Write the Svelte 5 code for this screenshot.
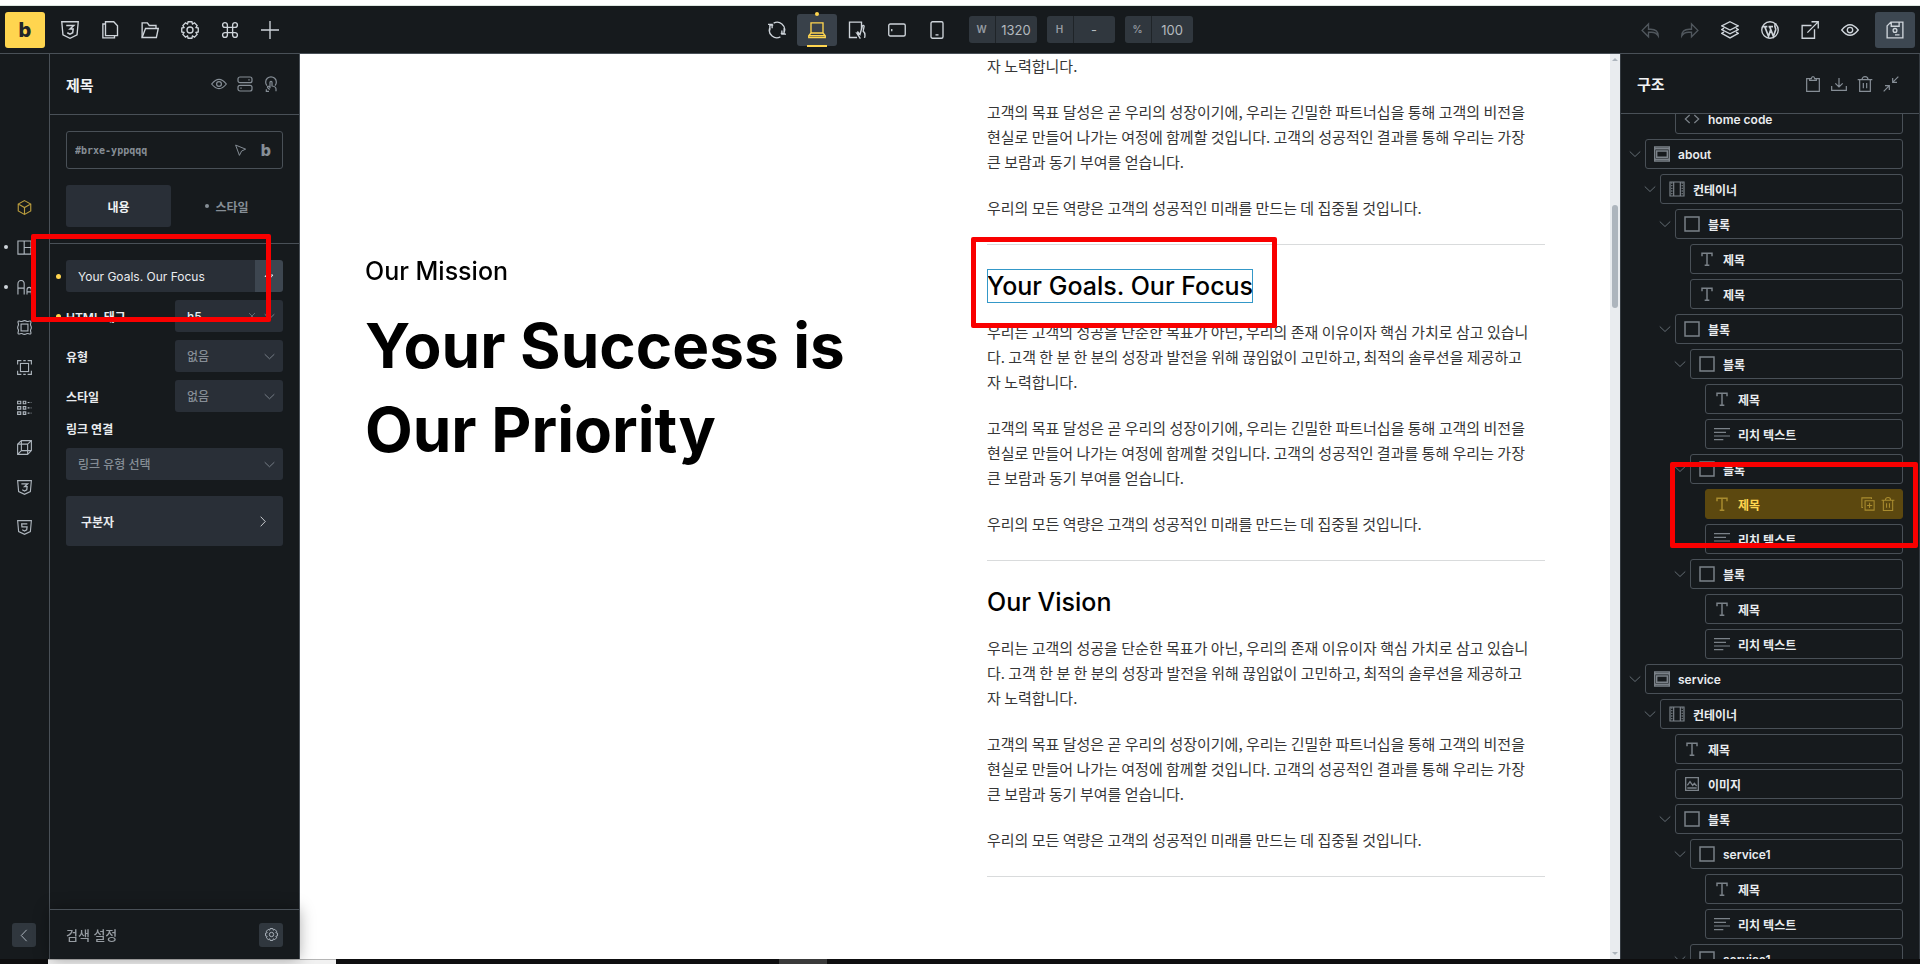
<script>
  import { onMount } from "svelte";

  // Inner markup of every icon, drawn on a 24x24 grid
  const icons = {
    css: '<path d="M1 1h22l-1.600 17.500L12 23l-9.400-4.500z"/><path d="M7 6h10l-5 4.700h4.200l-.6 5-3.600 1.800-3.600-1.800" stroke-width="2"/>',
    html: '<path d="M1 1h22l-1.600 17.500L12 23l-9.400-4.500z"/><path d="M16.500 6h-9l.4 5h8.200l-.6 4.700-3.500 1.800-3.600-1.800" stroke-width="2"/>',
    pages: '<path d="M6 1h11l5 5.500V19.500H6z"/><path d="M6 4H2.500V22.500H18V19.500"/>',
    folder: '<path d="M1.500 22V2.500h7l2.500 3.500h9v4"/><path d="M1.500 22l4.500-12h17l-2.500 12z"/>',
    gear: '<circle cx="12" cy="12" r="4"/><path d="M9.500 1h5l.8 3 2.700-1.500 3.500 3.500L20 8.700l3 .8v5l-3 .8 1.500 2.700-3.500 3.500-2.700-1.500-.8 3h-5l-.8-3L6 21.500 2.500 18 4 15.300l-3-.8v-5l3-.8L2.500 6 6 2.500 8.700 4z"/>',
    command: '<path d="M8.500 5.300a3.200 3.200 0 1 0-3.200 3.200h13.400a3.200 3.200 0 1 0-3.200-3.200v13.400a3.200 3.200 0 1 0 3.200-3.200H5.300a3.200 3.200 0 1 0 3.200 3.200z"/>',
    plus: '<path d="M12 0v24M0 12h24"/>',
    refresh: '<path d="M7.500 2.800A10 10 0 0 1 21.800 14.500M16.500 21.200A10 10 0 0 1 2.200 9.500"/><path d="M2.500 13.500V6.500H7M0 5.500h5.500v5M21.500 10.500v7H17M24 18.500h-5.500v-5" transform="translate(0 -1)"/>',
    laptop: '<path d="M4 2.500h16V16H4zM4 16L1 19.500V22h22v-2.500L20 16M1 19.500h22"/>',
    tablet: '<path d="M12 22H2V1.500h16V11"/><path d="M12.500 14l3.500 4 3-11c.5-2 2.800-1.300 2.400.5l-1.200 6c2.300 2 2.900 5.500 1.800 9M16 18l-4-1.500 4.500 7"/>',
    landscape: '<rect x="1" y="4" width="22" height="16" rx="2"/><path d="M5 10.500v3"/>',
    mobile: '<rect x="4" y="1" width="16" height="22" rx="2"/><path d="M10 18.500h4"/>',
    undo: '<path d="M23 20c0-6-3-9-10-9H10V4L1.500 12.500 10 21v-6h4c4 0 7 1.500 9 5z"/>',
    redo: '<path d="M1 20c0-6 3-9 10-9h3V4l8.500 8.500L14 21v-6h-4c-4 0-7 1.500-9 5z"/>',
    layers: '<path d="M12 1l11 5.500L12 12 1 6.500z"/><path d="M4 9.500l-3 2 11 5.500 11-5.500-3-2"/><path d="M4 14.500l-3 2L12 22.500l11-6-3-2"/>',
    wordpress: '<circle cx="12" cy="12" r="11"/><path d="M2.500 7.500h6M10 7.500h6M5 7.500l5 13 3-9M11.500 7.500l5 13 3-8.500c.8-3-1.700-4-1-6.500.3-1.200 1-1.500 2-1.200" stroke-width="2.200"/>',
    external: '<path d="M14 6H1.500v17H18V11M8.500 15.500L22.500 1.500M14 1h9v9"/>',
    eye: '<path d="M1 12c4-5 7-7 11-7s7 2 11 7c-4 5-7 7-11 7s-7-2-11-7z"/><circle cx="12" cy="12" r="3.600"/>',
    save: '<path d="M1.500 6.500l5-5h16v21h-21zM7 1.500V7h10.500V1.500M12 18.500h6"/><circle cx="12" cy="12.500" r="2.500"/>',
    toggles: '<rect x="1.500" y="1.500" width="21" height="8.500" rx="3"/><rect x="1.500" y="14" width="21" height="8.500" rx="3"/><path d="M17 5.800h2M5 18.300h2"/>',
    touch: '<path d="M6 14.500A8 8 0 1 1 18 14.500"/><path d="M10.500 18.500V9.500c0-2 3-2 3 0v5.500c4 .5 6 1.500 6 4.500V23M10.500 17l-2-1.500c-2-.5-2.500 1-1 2.500l2.500 2.500M9 23H5v-3"/>',
    pointer: '<path d="M3 2l18.500 7.500-7.500 3.500-4 8z"/>',
    cube: '<path d="M12 1l10 5.500v11L12 23 2 17.500v-11zM2 6.500L12 12l10-5.500M12 12v11"/>',
    layout: '<path d="M1.500 1.500h21v21h-21zM11.500 1.500v21M11.500 12h11"/>',
    type: '<path d="M1.500 23V6.500C1.500-1 11.500-1 11.500 6.500V23M1.500 13h10M16 23v-7c0-5.500 7-5.500 7 0v7M16 19h7"/>',
    background: '<rect x="6.500" y="6.500" width="11" height="11"/><path d="M2 2c2-1.500 4 1.500 6.700 0S13 .5 15.300 2 20 .5 22 2c1.500 2-1.500 4 0 6.700s1.500 4 0 6.600 1.500 4.700 0 6.700c-2 1.500-4-1.500-6.700 0s-4.300 1.500-6.600 0S4 23.500 2 22c-1.500-2 1.500-4 0-6.700s-1.500-4 0-6.600S.5 4 2 2z"/>',
    border: '<rect x="5.500" y="5.500" width="13" height="13"/><path d="M1 7V1h6M17 1h6v6M23 17v6h-6M7 23H1v-6M10 1h4M10 23h4"/>',
    grid: '<path d="M1 2h5v4H1zM10 2h4v4h-4zM1 10.500h5v4H1zM10 10.500h4v4h-4zM1 19h5v4H1zM10 19h4v4h-4zM17 4h3M22 4h1M17 12.500h3M22 12.500h1M17 21h3M22 21h1"/>',
    box: '<path d="M1 6.500L7 1h16v16l-6 6H1zM1 6.500h16V23M17 6.500L23 1M7 1v16h16M1 23l6-6"/>',
    bolt: '<path d="M14 2L4 13h7l-2 9L20 10h-7z"/>',
    down: '<path d="M1.500 7l10.500 10L22.500 7"/>',
    right: '<path d="M8 1.500L18 12 8 22.500"/>',
    left: '<path d="M16 1.500L6 12l10 10.500"/>',
    close: '<path d="M3 3l18 18M21 3L3 21"/>',
    clipboard: '<path d="M7 4H2.500v19h19V4H17M7 6.500V4h2.500c.5-4 4.500-4 5 0H17v2.500z"/>',
    download: '<path d="M12 3v13M6.500 11l5.500 5.500 5.500-5.500M1 15v6.500h22V15"/>',
    trash: '<path d="M1 5.500h22M4 5.500V23h16V5.500M7.500 5.500C7.500-.5 16.500-.5 16.500 5.500M9.500 10.500v8M14.500 10.500v8"/>',
    collapse: '<path d="M23 1l-8.500 8.500M14.500 3v6.500H21M1 23l8.500-8.500M3 14.500h6.500V21"/>',
    code: '<path d="M8.500 6L2 12l6.500 6M15.500 6l6.500 6-6.500 6"/>',
    section: '<path d="M1 1.500h22v21H1zM4 7.500h16v9.500H4zM1 4h22M1 20h22" stroke-width="2.200"/>',
    container: '<path d="M1.500 1.500h21v21h-21zM7 2v20M17 2v20"/><path d="M4.200 2v20M19.800 2v20" stroke-dasharray="2 2"/>',
    block: '<path d="M1.500 1.500h21v21h-21z" stroke-width="2.200"/>',
    heading: '<path d="M4.500 8V3.500h15V8M12 3.500v17.500M8.500 21.500h7" stroke-width="2.200"/>',
    text: '<path d="M0 4h24M0 9.500h18M0 15h24M0 20.500h14" stroke-width="1.800"/>',
    image: '<path d="M2.500 2.500h19v19h-19zM5 14l4-5.500 4 5.500 2.500-3 3.500 4M5 18h14" stroke-width="2"/>',
    duplicate: '<path d="M7 6.500h15.500v16H7zM3.500 18H1.500V1.500H18v2M14.700 10v9M10.200 14.500h9"/>',
  };

  const leftTools = ["css", "pages", "folder", "gear", "command", "plus"];
  const devices = ["refresh", "laptop", "tablet", "landscape", "mobile"];
  const rightTools = ["undo", "redo", "layers", "wordpress", "external", "eye"];
  const sizes = [
    { label: "W", value: "1320" },
    { label: "H", value: "-" },
    { label: "%", value: "100" },
  ];

  const rail = [
    { icon: "cube", active: true },
    { icon: "layout", dot: true },
    { icon: "type", dot: true },
    { icon: "background" },
    { icon: "border" },
    { icon: "grid" },
    { icon: "box" },
    { icon: "css" },
    { icon: "html" },
  ];

  const paragraphs = [
    [
      "우리는 고객의 성공을 단순한 목표가 아닌, 우리의 존재 이유이자 핵심 가치로 삼고 있습니",
      "다. 고객 한 분 한 분의 성장과 발전을 위해 끊임없이 고민하고, 최적의 솔루션을 제공하고",
      "자 노력합니다.",
    ],
    [
      "고객의 목표 달성은 곧 우리의 성장이기에, 우리는 긴밀한 파트너십을 통해 고객의 비전을",
      "현실로 만들어 나가는 여정에 함께할 것입니다. 고객의 성공적인 결과를 통해 우리는 가장",
      "큰 보람과 동기 부여를 얻습니다.",
    ],
    ["우리의 모든 역량은 고객의 성공적인 미래를 만드는 데 집중될 것입니다."],
  ];

  // what is left of the first story once the page is scrolled
  const tail = [paragraphs[0].slice(2), paragraphs[1], paragraphs[2]];

  const tree = [
    { depth: 2, icon: "code", name: "home code" },
    { depth: 0, icon: "section", name: "about", open: true },
    { depth: 1, icon: "container", name: "컨테이너", open: true },
    { depth: 2, icon: "block", name: "블록", open: true },
    { depth: 3, icon: "heading", name: "제목" },
    { depth: 3, icon: "heading", name: "제목" },
    { depth: 2, icon: "block", name: "블록", open: true },
    { depth: 3, icon: "block", name: "블록", open: true },
    { depth: 4, icon: "heading", name: "제목" },
    { depth: 4, icon: "text", name: "리치 텍스트" },
    { depth: 3, icon: "block", name: "블록", open: true },
    { depth: 4, icon: "heading", name: "제목", active: true },
    { depth: 4, icon: "text", name: "리치 텍스트" },
    { depth: 3, icon: "block", name: "블록", open: true },
    { depth: 4, icon: "heading", name: "제목" },
    { depth: 4, icon: "text", name: "리치 텍스트" },
    { depth: 0, icon: "section", name: "service", open: true },
    { depth: 1, icon: "container", name: "컨테이너", open: true },
    { depth: 2, icon: "heading", name: "제목" },
    { depth: 2, icon: "image", name: "이미지" },
    { depth: 2, icon: "block", name: "블록", open: true },
    { depth: 3, icon: "block", name: "service1", open: true },
    { depth: 4, icon: "heading", name: "제목" },
    { depth: 4, icon: "text", name: "리치 텍스트" },
    { depth: 3, icon: "block", name: "service1", open: true },
  ];

  let title = $state("Your Goals. Our Focus");
  let canvasEl;
  let treeEl;

  onMount(() => {
    canvasEl.scrollTop = canvasEl.scrollHeight;
    treeEl.scrollTop = 10;
  });
</script>

{#snippet icon(name, size = 18)}
  <svg width={size} height={size} viewBox="0 0 24 24" aria-hidden="true">
    {@html icons[name]}
  </svg>
{/snippet}

{#snippet dropdown(id, value, clearable = false)}
  <div class="select" class:filled={clearable}>
    <select {id}><option>{value}</option></select>
    <span class="select-icons">
      {#if clearable}{@render icon("close", 8)}{/if}
      {@render icon("down", 11)}
    </span>
  </div>
{/snippet}

{#snippet story(heading, body, selected = false)}
  <section class="story" class:first={!heading}>
    {#if heading}<h5 class:selected>{heading}</h5>{/if}
    {#each body as lines}
      <p>{#each lines as line}<span>{line}</span>{/each}</p>
    {/each}
  </section>
{/snippet}

<div class="screen">
  <div class="window-edge"></div>

  <header class="toolbar">
    <div class="group">
      <button class="logo" aria-label="Menu">b</button>
      {#each leftTools as name}
        <button class="tool" aria-label={name}>{@render icon(name)}</button>
      {/each}
    </div>

    <div class="group middle">
      {#each devices as name}
        <button class="tool" class:current={name === "laptop"} aria-label={name}>
          {@render icon(name)}
        </button>
      {/each}
      <div class="sizes">
        {#each sizes as s}
          <label class="size">
            <span>{s.label}</span>
            <input value={s.value} />
          </label>
        {/each}
      </div>
    </div>

    <div class="group">
      {#each rightTools as name}
        <button class="tool" class:disabled={name === "undo" || name === "redo"} aria-label={name}>
          {@render icon(name)}
        </button>
      {/each}
      <button class="tool save" aria-label="Save">{@render icon("save")}</button>
    </div>
  </header>

  <main>
    <nav class="rail">
      <div class="rail-items">
        {#each rail as item}
          <button class:active={item.active} class:dot={item.dot} aria-label={item.icon}>
            {@render icon(item.icon, 15)}
          </button>
        {/each}
      </div>
      <button class="square" aria-label="Collapse">{@render icon("left", 13)}</button>
    </nav>

    <aside class="panel">
      <div class="panel-head">
        <h2>제목</h2>
        <div class="head-icons">
          <button aria-label="Preview">{@render icon("eye", 16)}</button>
          <button aria-label="Conditions">{@render icon("toggles", 16)}</button>
          <button aria-label="Interactions">{@render icon("touch", 16)}</button>
        </div>
      </div>

      <div class="selector">
        <div class="element-id">
          <input aria-label="Element id" value="#brxe-yppqqq" />
          {@render icon("pointer", 13)}
          <b>b</b>
        </div>
        <div class="tabs">
          <button class="on">내용</button>
          <button class="dotted">스타일</button>
        </div>
      </div>

      <div class="controls">
        <div class="text-control changed">
          <input aria-label="제목" bind:value={title} />
          <button aria-label="Dynamic data">{@render icon("bolt", 12)}</button>
        </div>
        <div class="control changed">
          <label for="tag">HTML 태그</label>
          {@render dropdown("tag", "h5", true)}
        </div>
        <div class="control">
          <label for="type">유형</label>
          {@render dropdown("type", "없음")}
        </div>
        <div class="control">
          <label for="style">스타일</label>
          {@render dropdown("style", "없음")}
        </div>
        <div class="control stacked">
          <label for="link">링크 연결</label>
          {@render dropdown("link", "링크 유형 선택")}
        </div>
        <button class="accordion">구분자 {@render icon("right", 11)}</button>
      </div>

      <footer>
        <input type="search" aria-label="검색 설정" placeholder="검색 설정" />
        <button class="square" aria-label="Settings">{@render icon("gear", 13)}</button>
      </footer>
    </aside>

    <div class="canvas" bind:this={canvasEl}>
      <div class="page">
        <div class="intro">
          <h5>Our Mission</h5>
          <h1>Your Success is<br />Our Priority</h1>
        </div>
        <div class="stories">
          {@render story("", tail)}
          {@render story(title, paragraphs, true)}
          {@render story("Our Vision", paragraphs)}
        </div>
      </div>
    </div>
    <div class="scrollbar">
      <i class="arrow up"></i>
      <i class="track-top"></i>
      <i class="thumb"></i>
      <i class="track-rest"></i>
      <i class="arrow"></i>
    </div>

    <aside class="structure">
      <div class="panel-head">
        <h2>구조</h2>
        <div class="head-icons">
          <button aria-label="Paste">{@render icon("clipboard", 16)}</button>
          <button aria-label="Import">{@render icon("download", 16)}</button>
          <button aria-label="Delete">{@render icon("trash", 16)}</button>
          <button aria-label="Collapse">{@render icon("collapse", 16)}</button>
        </div>
      </div>
      <ul bind:this={treeEl}>
        {#each tree as node}
          <li style="padding-left: {node.depth * 15}px">
            <span class="toggle">
              {#if node.open}{@render icon("down", 12)}{/if}
            </span>
            <div class="node" class:active={node.active}>
              {@render icon(node.icon, 16)}
              <span>{node.name}</span>
              {#if node.active}
                <div class="node-actions">
                  {@render icon("duplicate", 14)}
                  {@render icon("trash", 14)}
                </div>
              {/if}
            </div>
          </li>
        {/each}
      </ul>
    </aside>
  </main>

  <div class="taskbar"><i class="task"></i><i class="tray"></i></div>

  <!-- highlights -->
  <div class="mark mark-input"></div>
  <div class="mark mark-heading"></div>
  <div class="mark mark-node"></div>
</div>

<style>
  :global(body) {
    margin: 0;
  }

  .screen {
    position: relative;
    display: flex;
    flex-direction: column;
    height: 100vh;
    overflow: hidden;
    font-family: Inter, "Noto Sans CJK KR", sans-serif;
    font-size: 12px;
    color: #e9ecef;
    background: #161a1d;
  }

  .screen * {
    box-sizing: border-box;
  }

  button,
  input,
  select {
    margin: 0;
    padding: 0;
    border: none;
    background: none;
    color: inherit;
    font: inherit;
    outline: none;
    min-width: 0;
  }

  button {
    display: flex;
    align-items: center;
    justify-content: center;
    cursor: pointer;
  }

  h1,
  h2,
  h5,
  p,
  ul {
    margin: 0;
    padding: 0;
  }

  svg {
    flex-shrink: 0;
    fill: none;
    stroke: currentColor;
    stroke-width: 1.8;
  }

  .window-edge {
    flex: none;
    height: 6px;
    background: #fff;
    border-bottom: 1px solid #dde7e1;
  }

  /* Toolbar */
  .toolbar {
    flex: none;
    display: flex;
    justify-content: space-between;
    height: 48px;
    padding: 0 5px;
    border-bottom: 1px solid #495057;
  }

  .group {
    display: flex;
    align-items: center;
  }

  .middle {
    padding-left: 29px;
  }

  .logo {
    width: 40px;
    height: 36px;
    margin-right: 5px;
    border-radius: 3px;
    background: #ffd54f;
    color: #212529;
    font-size: 20px;
    font-weight: 800;
  }

  .tool {
    position: relative;
    width: 40px;
    height: 32px;
    color: #ced4da;
  }

  .tool.disabled {
    color: #50575d;
  }

  .tool.current {
    background: #39414a;
    border-radius: 3px;
    color: #ffd54f;
  }

  .current::before,
  .current::after {
    content: "";
    position: absolute;
    background: #ffd54f;
  }

  .current::before {
    top: -2px;
    width: 4px;
    height: 4px;
    border-radius: 50%;
  }

  .current::after {
    bottom: -1px;
    width: 20px;
    height: 2px;
  }

  .save {
    height: 36px;
    margin-left: 5px;
    border-radius: 3px;
    background: #3d4751;
  }

  .sizes {
    display: flex;
    gap: 10px;
    margin-left: 12px;
  }

  .size {
    display: flex;
    width: 68px;
    height: 27px;
    border-radius: 3px;
    background: #30373e;
    overflow: hidden;
  }

  .size span {
    width: 26px;
    line-height: 27px;
    text-align: center;
    font-size: 10px;
    font-weight: 600;
    color: #969ca2;
  }

  .size input {
    flex: 1;
    border-left: 1px solid #1f2428;
    text-align: center;
    font-size: 13px;
    color: #b4babf;
  }

  main {
    flex: 1;
    display: flex;
    min-height: 0;
  }

  /* Icon rail */
  .rail {
    width: 50px;
    flex: none;
    display: flex;
    flex-direction: column;
    justify-content: space-between;
    padding: 133px 0 12px;
    border-right: 1px solid #495057;
  }

  .rail-items button {
    position: relative;
    width: 48px;
    height: 40px;
    color: #adb5bd;
  }

  .rail-items .active {
    color: #b99c3d;
  }

  .rail-items .dot::before {
    content: "";
    position: absolute;
    left: 4px;
    width: 4px;
    height: 4px;
    border-radius: 50%;
    background: #ced4da;
  }

  .square {
    width: 24px;
    height: 24px;
    border-radius: 3px;
    background: #30373e;
    color: #adb5bd;
  }

  .rail .square {
    margin-left: 12px;
  }

  /* Element panel */
  .panel {
    position: relative;
    z-index: 1;
    width: 250px;
    flex: none;
    display: flex;
    flex-direction: column;
    border-right: 1px solid #495057;
  }

  .panel-head {
    flex: none;
    display: flex;
    align-items: center;
    justify-content: space-between;
    height: 60px;
    padding: 0 20px 0 16px;
    border-bottom: 1px solid #495057;
  }

  .panel .panel-head {
    height: 61px;
  }

  .panel-head h2 {
    font-size: 15px;
    font-weight: 700;
    color: #f1f3f5;
  }

  .head-icons {
    display: flex;
    gap: 10px;
    color: #868e96;
  }

  .selector {
    padding: 16px;
    border-bottom: 1px solid #495057;
  }

  .element-id {
    display: flex;
    align-items: center;
    gap: 14px;
    height: 38px;
    padding: 0 11px 0 8px;
    border: 1px solid #495057;
    border-radius: 3px;
    color: #868e96;
  }

  .element-id input {
    flex: 1;
    font-family: "DejaVu Sans Mono", monospace;
    font-size: 10px;
    font-weight: 700;
  }

  .element-id b {
    font-size: 16px;
    font-weight: 800;
  }

  .tabs {
    display: grid;
    grid-template-columns: 105px 1fr;
    margin-top: 16px;
  }

  .tabs button {
    height: 42px;
    border-radius: 3px;
    font-weight: 700;
    color: #868e96;
  }

  .tabs .on {
    background: #292f37;
    color: #f1f3f5;
  }

  .dotted::before {
    content: "";
    width: 4px;
    height: 4px;
    margin-right: 6px;
    border-radius: 50%;
    background: #868e96;
  }

  .controls {
    flex: 1;
    display: flex;
    flex-direction: column;
    gap: 8px;
    padding: 16px;
  }

  .text-control {
    display: flex;
    height: 32px;
  }

  .text-control input {
    flex: 1;
    padding-left: 12px;
    border-radius: 3px 0 0 3px;
    background: #292f37;
  }

  .text-control button {
    width: 28px;
    border-radius: 0 3px 3px 0;
    background: #3d4650;
  }

  .changed {
    position: relative;
  }

  .changed::before {
    content: "";
    position: absolute;
    left: -10px;
    top: 14px;
    width: 5px;
    height: 5px;
    border-radius: 50%;
    background: #ffd54f;
  }

  .control {
    display: grid;
    grid-template-columns: 1fr 108px;
    align-items: center;
  }

  .control label {
    font-weight: 600;
  }

  .stacked {
    grid-template-columns: 1fr;
  }

  .stacked label {
    line-height: 20px;
    margin-bottom: 8px;
  }

  .select {
    display: grid;
    height: 32px;
    border-radius: 3px;
    background: #292f37;
    color: #868e96;
  }

  .select select {
    grid-area: 1 / 1;
    padding-left: 12px;
    appearance: none;
    font-weight: 500;
  }

  .filled select {
    color: #e9ecef;
  }

  .select-icons {
    grid-area: 1 / 1;
    display: flex;
    align-items: center;
    gap: 8px;
    justify-self: end;
    padding-right: 8px;
    pointer-events: none;
  }

  .accordion {
    justify-content: space-between;
    height: 50px;
    margin-top: 8px;
    padding: 0 15px;
    border-radius: 3px;
    background: #292f37;
    font-weight: 700;
  }

  footer {
    display: flex;
    align-items: center;
    justify-content: space-between;
    height: 50px;
    padding: 0 16px;
    border-top: 1px solid #495057;
    background: #161a1d;
    box-shadow: 0 0 16px rgba(0, 0, 0, 0.35);
  }

  footer input {
    flex: 1;
    font-size: 13px;
    font-weight: 500;
  }

  footer input::placeholder {
    color: #969ca2;
    opacity: 1;
  }

  /* Canvas */
  .canvas {
    flex: 1;
    overflow: hidden;
    background: #fff;
    color: #000;
  }

  .page {
    display: grid;
    grid-template-columns: 1fr 1fr;
    gap: 64px;
    padding: 0 65px 82px;
  }

  .intro {
    position: sticky;
    top: 200px;
    align-self: start;
  }

  h5 {
    width: fit-content;
    margin-bottom: 16px;
    font-size: 25px;
    font-weight: 500;
    line-height: 34px;
    white-space: nowrap;
  }

  h1 {
    font-size: 62px;
    font-weight: 700;
    line-height: 84px;
    white-space: nowrap;
  }

  .story {
    padding: 24px 0;
    border-bottom: 1px solid #d9dbdc;
  }

  .story.first {
    padding-top: 0;
  }

  .selected {
    outline: 1px solid #3498c8;
    outline-offset: -1px;
  }

  .story p {
    font-family: "Noto Sans CJK KR", sans-serif;
    font-size: 15px;
    line-height: 25px;
    color: #363636;
  }

  .story p + p {
    margin-top: 21px;
  }

  .story p span {
    display: block;
    white-space: nowrap;
  }

  .scrollbar {
    flex: none;
    display: flex;
    flex-direction: column;
    align-items: center;
    width: 10px;
    padding: 4px 0;
    background: #e9ecef;
  }

  .thumb {
    flex: 103;
    width: 6px;
    border-radius: 3px;
    background: #adb5bd;
  }

  .track-top {
    flex: 144;
  }

  .track-rest {
    flex: 644;
  }

  .arrow {
    border: 3px solid transparent;
    border-top-color: #adb5bd;
    border-bottom: none;
  }

  .up {
    border-top: none;
    border-bottom: 3px solid #adb5bd;
  }

  /* Structure */
  .structure {
    flex: none;
    display: flex;
    flex-direction: column;
    width: 300px;
    border-left: 1px solid #343a40;
    border-right: 1px solid #343a40;
  }

  .structure ul {
    flex: 1;
    min-height: 0;
    overflow: hidden;
    list-style: none;
    padding: 0 16px 0 4px;
  }

  li {
    display: flex;
    margin-bottom: 5px;
  }

  .toggle {
    display: flex;
    align-items: center;
    width: 20px;
    padding-left: 4px;
    color: #6c757d;
  }

  .node {
    flex: 1;
    display: flex;
    align-items: center;
    gap: 8px;
    height: 30px;
    padding: 0 7px 0 8px;
    border: 1px solid #495057;
    border-radius: 3px;
    color: #7b8289;
  }

  .node span {
    font-weight: 600;
    color: #e9ecef;
  }

  .node.active {
    border-color: #5c480f;
    background: #5c480f;
    color: #a98c2f;
  }

  .node.active span {
    color: #ffd54f;
  }

  .node-actions {
    display: flex;
    gap: 6px;
    margin-left: auto;
  }

  .taskbar {
    flex: none;
    display: flex;
    height: 5px;
    padding-left: 48px;
    background: #0e0e0f;
  }

  .task {
    width: 288px;
    background: #f1f1f1;
    border-top: 1px solid #b5b5b5;
  }

  .tray {
    width: 48px;
    margin-left: 443px;
    background: #3a3a3a;
  }

  .mark {
    position: absolute;
    z-index: 2;
    border: 5px solid #f90000;
    border-radius: 2px;
    pointer-events: none;
  }

  .mark-input {
    left: 31px;
    top: 234px;
    width: 240px;
    height: 88px;
  }

  .mark-heading {
    left: 971px;
    top: 237px;
    width: 306px;
    height: 91px;
  }

  .mark-node {
    right: 2px;
    top: 462px;
    width: 248px;
    height: 86px;
  }
</style>
